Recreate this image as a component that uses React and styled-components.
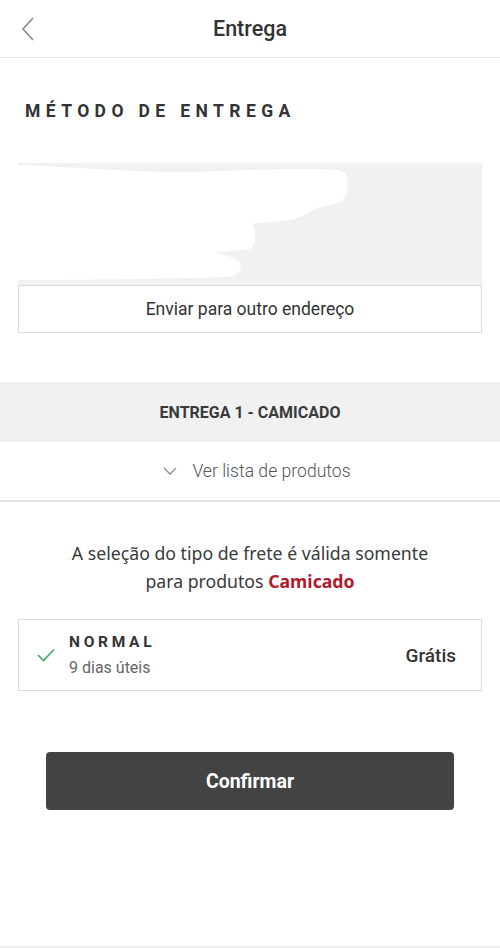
import React from "react";
import styled, { createGlobalStyle } from "styled-components";

const GlobalStyle = createGlobalStyle`
  body {
    margin: 0;
    background: #ffffff;
    font-family: Roboto, "Liberation Sans", sans-serif;
    color: #333333;
  }
`;

const Page = styled.div`
  width: 500px;
  min-height: 946px;
  border-bottom: 2px solid #efefef;
  display: flex;
  flex-direction: column;
`;

const Header = styled.header`
  height: 57px;
  border-bottom: 1px solid #e6e6e6;
  display: flex;
  align-items: center;
  justify-content: center;
  position: relative;
`;

const BackButton = styled.button`
  position: absolute;
  left: 16px;
  top: 14px;
  width: 24px;
  height: 30px;
  padding: 0;
  border: none;
  background: none;
  display: flex;
  align-items: center;
  justify-content: center;
`;

const Title = styled.h1`
  margin: 0;
  font-size: 21.5px;
  font-weight: 500;
  color: #333333;
`;

const Section = styled.section`
  padding: 0 18px;
  display: flex;
  flex-direction: column;
`;

const SectionTitle = styled.h2`
  margin: 41px 0 0 7px;
  font-size: 17.5px;
  font-weight: 700;
  letter-spacing: 5.4px;
  color: #333333;
  line-height: 24px;
`;

const AddressBox = styled.div`
  margin-top: 40px;
  height: 122px;
  background: #f1f1f1;
  overflow: hidden;
`;

const OutlineButton = styled.button`
  height: 48px;
  border: 1px solid #dcdcdc;
  background: #ffffff;
  font-family: Roboto, "Liberation Sans", sans-serif;
  font-size: 17.5px;
  font-weight: 400;
  color: #333333;
`;

const DeliveryBand = styled.div`
  margin-top: 49px;
  height: 60px;
  background: #f1f1f1;
  display: flex;
  align-items: center;
  justify-content: center;
  font-size: 16px;
  font-weight: 700;
  color: #3a3a3a;
`;

const ProductToggle = styled.button`
  height: 60px;
  border: none;
  border-bottom: 2px solid #e2e2e2;
  background: #ffffff;
  display: flex;
  align-items: center;
  justify-content: center;
  gap: 15px;
  padding: 0 0 0 14px;
  font-family: Roboto, "Liberation Sans", sans-serif;
  font-size: 17.6px;
  font-weight: 300;
  color: #555555;
`;

const Notice = styled.p`
  margin: 37px 0 0;
  text-align: center;
  font-family: "Noto Sans", Roboto, sans-serif;
  font-size: 17.7px;
  line-height: 28px;
  color: #3a3a3a;
`;

const Brand = styled.strong`
  color: #b3192c;
  font-weight: 700;
`;

const OptionCard = styled.div`
  margin-top: 24px;
  height: 72px;
  border: 1px solid #dcdcdc;
  display: flex;
  align-items: center;
  padding: 0 25px 0 18px;
  box-sizing: border-box;
`;

const CheckMark = styled.div`
  width: 18px;
  display: flex;
  margin-right: 14px;
`;

const OptionInfo = styled.div`
  flex: 1;
  display: flex;
  flex-direction: column;
  gap: 7px;
`;

const OptionName = styled.span`
  font-size: 15.5px;
  font-weight: 700;
  letter-spacing: 3.7px;
  color: #333333;
`;

const OptionTime = styled.span`
  font-size: 16px;
  color: #666666;
`;

const OptionPrice = styled.span`
  font-size: 19px;
  font-weight: 500;
  color: #333333;
`;

const Footer = styled.div`
  padding: 61px 46px 0;
  display: flex;
`;

const PrimaryButton = styled.button`
  flex: 1;
  height: 58px;
  border: none;
  border-radius: 4px;
  background: #434343;
  color: #ffffff;
  font-family: Roboto, "Liberation Sans", sans-serif;
  font-size: 19.5px;
  font-weight: 700;
`;

const App = () => (
  <>
    <GlobalStyle />
    <Page>
      <Header>
        <BackButton aria-label="Voltar">
          <svg width="16" height="26" viewBox="0 0 16 26" fill="none">
            <path d="M13 2 L3 13 L13 24" stroke="#8a8a8a" strokeWidth="1.6" />
          </svg>
        </BackButton>
        <Title>Entrega</Title>
      </Header>

      <Section>
        <SectionTitle>MÉTODO DE ENTREGA</SectionTitle>
        <AddressBox>
          <svg width="464" height="122" viewBox="0 0 464 122">
            <path
              d="M0 2 C60 4 120 10 180 9 C240 6 300 5 320 7 C330 9 330 18 329 26
                 C329 36 324 40 312 42 C300 44 296 46 290 50 C282 56 270 58 240 60
                 C232 61 236 62 236 66 C238 74 238 82 232 86 C220 88 204 88 196 90
                 C206 92 218 94 222 100 C224 106 222 112 210 114
                 C150 116 60 117 0 117 Z"
              fill="#ffffff"
            />
          </svg>
        </AddressBox>
        <OutlineButton>Enviar para outro endereço</OutlineButton>
      </Section>

      <DeliveryBand>ENTREGA 1 - CAMICADO</DeliveryBand>
      <ProductToggle>
        <svg width="14" height="8" viewBox="0 0 14 8" fill="none">
          <path d="M1 1 L7 7 L13 1" stroke="#8a8a8a" strokeWidth="1.3" />
        </svg>
        Ver lista de produtos
      </ProductToggle>

      <Notice>
        A seleção do tipo de frete é válida somente
        <br />
        para produtos <Brand>Camicado</Brand>
      </Notice>

      <Section>
        <OptionCard>
          <CheckMark>
            <svg width="18" height="14" viewBox="0 0 18 14" fill="none">
              <path d="M1 7 L6.5 12.5 L17 1.5" stroke="#3aa866" strokeWidth="1.6" />
            </svg>
          </CheckMark>
          <OptionInfo>
            <OptionName>NORMAL</OptionName>
            <OptionTime>9 dias úteis</OptionTime>
          </OptionInfo>
          <OptionPrice>Grátis</OptionPrice>
        </OptionCard>
      </Section>

      <Footer>
        <PrimaryButton>Confirmar</PrimaryButton>
      </Footer>
    </Page>
  </>
);

export default App;
